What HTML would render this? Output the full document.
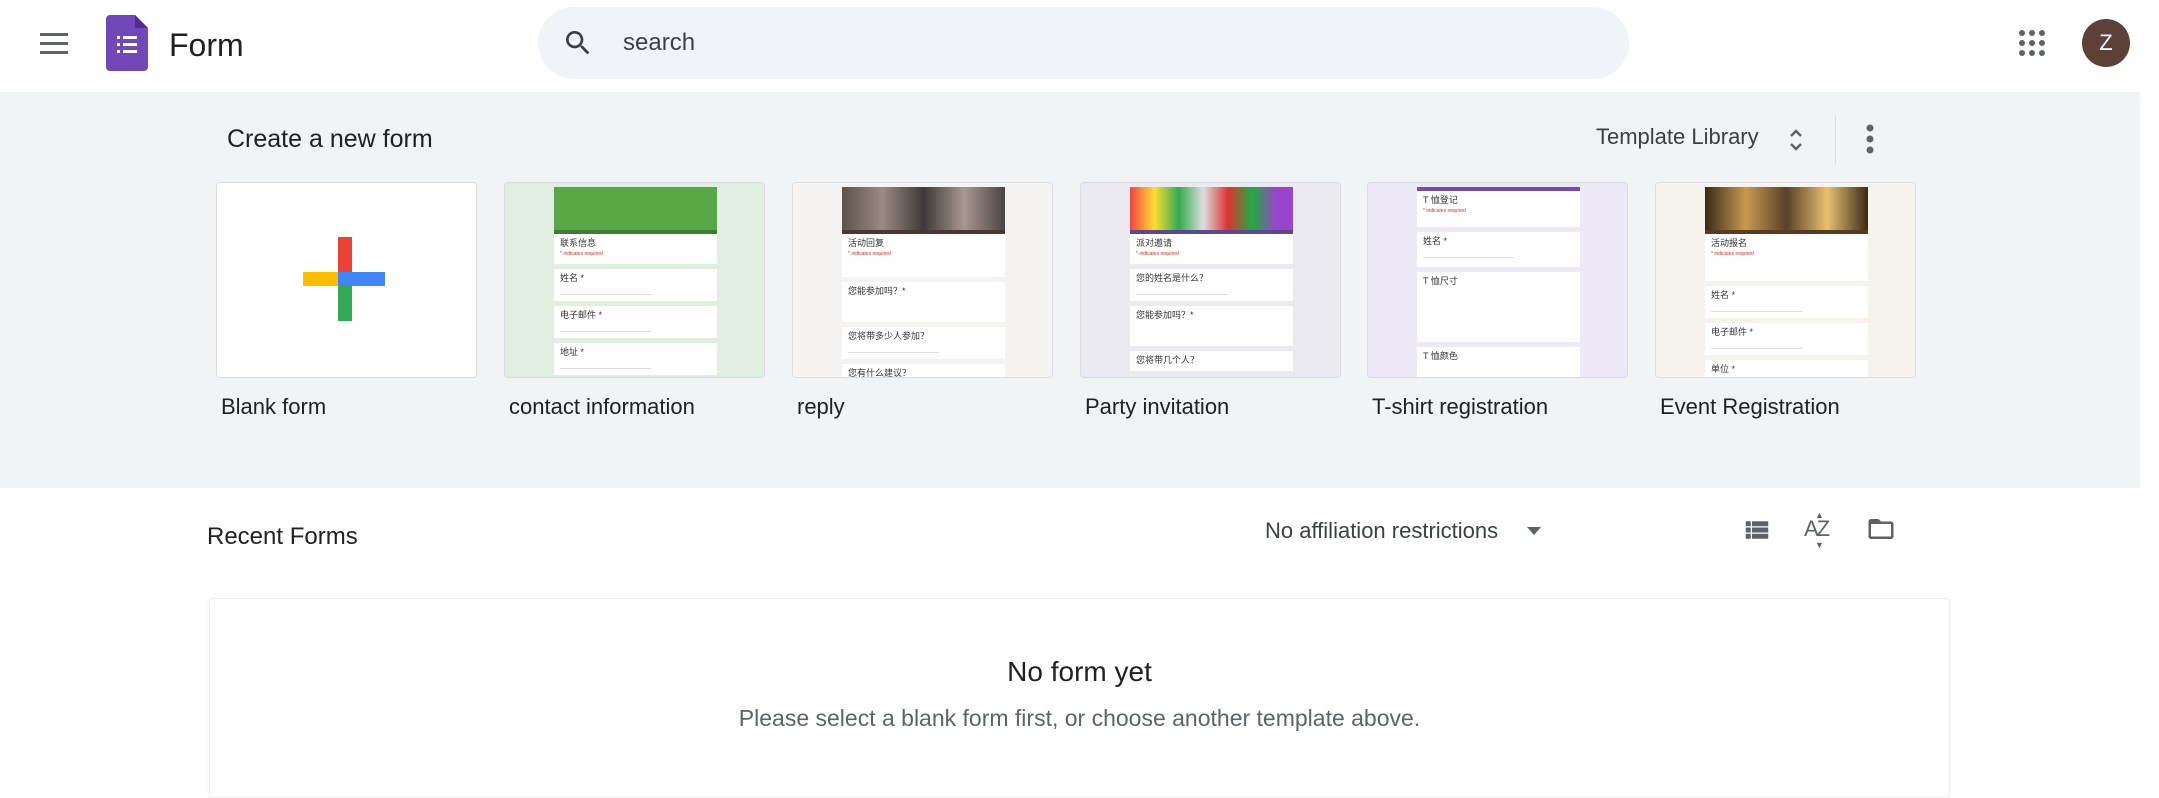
<!DOCTYPE html>
<html><head><meta charset="utf-8"><style>
*{box-sizing:border-box;margin:0;padding:0}
body{width:2159px;height:778px;overflow:hidden;background:#fff;font-family:"Liberation Sans","Noto Sans CJK SC",sans-serif;position:relative;color:#202124}
.a{position:absolute}
.band{left:0;top:92px;width:2140px;height:396px;background:#f1f3f4}
.card{position:absolute;top:182px;width:261px;height:196px;border:1px solid #dadce0;border-radius:4px;overflow:hidden}
.col{position:absolute;left:49px;top:4px;width:163px}
.img{height:43px}
.bar{height:4px}
.blk{background:#fff;margin-bottom:5px;padding:4px 6px;font-size:9px;line-height:11px;color:#333}
.red{color:#d93025;font-size:5px}
.ln{height:1px;background:#ddd;width:60%;margin-top:10px}
.lbl{position:absolute;top:394px;font-size:22px;color:#202124}
</style></head><body>
<div class="a" style="left:40px;top:33px;width:28px;height:3px;background:#5f6368;box-shadow:0 9px 0 #5f6368,0 18px 0 #5f6368"></div>
<svg class="a" style="left:106px;top:15px" width="42" height="56" viewBox="0 0 42 56"><path d="M4 0H29L42 13V52a4 4 0 0 1-4 4H4a4 4 0 0 1-4-4V4a4 4 0 0 1 4-4z" fill="#7248b9"/><path d="M29 0V13H42z" fill="#4e2d96"/><g fill="#fff"><rect x="11" y="21" width="3" height="3"/><rect x="11" y="28" width="3" height="3"/><rect x="11" y="35" width="3" height="3"/><rect x="17" y="21" width="14" height="3"/><rect x="17" y="28" width="14" height="3"/><rect x="17" y="35" width="14" height="3"/></g></svg>
<div class="a" style="left:169px;top:27px;font-size:32px;color:#202124">Form</div>
<div class="a" style="left:538px;top:7px;width:1091px;height:72px;border-radius:36px;background:#f0f3f7"></div>
<svg class="a" style="left:562px;top:27px" width="32" height="32" viewBox="0 0 24 24"><path d="M15.5 14h-.79l-.28-.27A6.470 6.470 0 0 0 16 9.5 6.5 6.5 0 1 0 9.5 16c1.61 0 3.090-.59 4.230-1.570l.27.28v.79l5 4.990L20.490 19l-4.990-5zm-6 0C7.010 14 5 11.990 5 9.5S7.010 5 9.5 5 14 7.010 14 9.5 11.990 14 9.5 14z" fill="#3c4043"/></svg>
<div class="a" style="left:623px;top:29px;font-size:24px;color:#3c4043">search</div>
<svg class="a" style="left:2018px;top:29px" width="28" height="28" viewBox="0 0 28 28" fill="#5f6368"><circle cx="4" cy="4" r="3"/><circle cx="14" cy="4" r="3"/><circle cx="24" cy="4" r="3"/><circle cx="4" cy="14" r="3"/><circle cx="14" cy="14" r="3"/><circle cx="24" cy="14" r="3"/><circle cx="4" cy="24" r="3"/><circle cx="14" cy="24" r="3"/><circle cx="24" cy="24" r="3"/></svg>
<div class="a" style="left:2082px;top:19px;width:48px;height:48px;border-radius:50%;background:#5d4037;color:#fff;font-size:22px;text-align:center;line-height:48px">Z</div>

<div class="a band"></div>
<div class="a" style="left:227px;top:125px;font-size:25px;color:#202124">Create a new form</div>
<div class="a" style="left:1596px;top:124px;font-size:22px;color:#3c4043">Template Library</div>
<svg class="a" style="left:1786px;top:126px" width="20" height="28" viewBox="0 0 20 28" fill="none" stroke="#5f6368" stroke-width="2.5"><path d="M5 10l5-5 5 5M5 18l5 5 5-5"/></svg>
<div class="a" style="left:1835px;top:116px;width:1px;height:48px;background:#dadce0"></div>
<svg class="a" style="left:1863px;top:124px" width="14" height="32" fill="#5f6368"><circle cx="7" cy="4" r="3.5"/><circle cx="7" cy="15" r="3.5"/><circle cx="7" cy="26" r="3.5"/></svg>

<div class="card" style="left:216px;background:#fff">
<div class="a" style="left:121px;top:54px;width:14px;height:45px;background:#ea4335"></div>
<div class="a" style="left:86px;top:89px;width:35px;height:14px;background:#fbbc04"></div>
<div class="a" style="left:121px;top:89px;width:47px;height:14px;background:#4285f4"></div>
<div class="a" style="left:121px;top:103px;width:14px;height:35px;background:#34a853"></div>
</div>
<div class="card" style="left:504px;background:#e3eee2"><div class="col">
<div class="img" style="background:#55a845"></div><div class="bar" style="background:#3e7d33"></div>
<div class="blk" style="height:30px">联系信息<div class="red">* indicates required</div></div>
<div class="blk" style="height:32px">姓名 *<div class="ln"></div></div>
<div class="blk" style="height:32px">电子邮件 *<div class="ln"></div></div>
<div class="blk" style="height:32px">地址 *<div class="ln"></div></div></div></div>
<div class="card" style="left:792px;background:#f5f3f1"><div class="col">
<div class="img" style="background:linear-gradient(90deg,#5c5450,#9a8a80,#3d3a3a,#a89890,#4a4444)"></div><div class="bar" style="background:#4e3533"></div>
<div class="blk" style="height:43px">活动回复<div class="red">* indicates required</div></div>
<div class="blk" style="height:40px">您能参加吗？*</div>
<div class="blk" style="height:32px">您将带多少人参加？<div class="ln"></div></div>
<div class="blk" style="height:20px">您有什么建议？</div></div></div>
<div class="card" style="left:1080px;background:#ebeaf0"><div class="col">
<div class="img" style="background:linear-gradient(90deg,#e44 0,#fd3 15%,#3a5 30%,#ddd 45%,#d33 60%,#2a4 75%,#94c 90%)"></div><div class="bar" style="background:#5a4a8a"></div>
<div class="blk" style="height:30px">派对邀请<div class="red">* indicates required</div></div>
<div class="blk" style="height:32px">您的姓名是什么？<div class="ln"></div></div>
<div class="blk" style="height:40px">您能参加吗？*</div>
<div class="blk" style="height:20px">您将带几个人？</div></div></div>
<div class="card" style="left:1367px;background:#eee9f7"><div class="col">
<div class="bar" style="background:#6d4fb5"></div>
<div class="blk" style="height:36px">T 恤登记<div class="red">* indicates required</div></div>
<div class="blk" style="height:35px">姓名 *<div class="ln"></div></div>
<div class="blk" style="height:70px">T 恤尺寸</div>
<div class="blk" style="height:40px">T 恤颜色</div></div></div>
<div class="card" style="left:1655px;background:#f6f3ef"><div class="col">
<div class="img" style="background:linear-gradient(90deg,#3a2a18,#c89a50,#5a4028,#e8c070,#3a2a18)"></div><div class="bar" style="background:#5a3a22"></div>
<div class="blk" style="height:47px">活动报名<div class="red">* indicates required</div></div>
<div class="blk" style="height:32px">姓名 *<div class="ln"></div></div>
<div class="blk" style="height:32px">电子邮件 *<div class="ln"></div></div>
<div class="blk" style="height:20px">单位 *</div></div></div>

<div class="lbl" style="left:221px">Blank form</div>
<div class="lbl" style="left:509px">contact information</div>
<div class="lbl" style="left:797px">reply</div>
<div class="lbl" style="left:1085px">Party invitation</div>
<div class="lbl" style="left:1372px">T-shirt registration</div>
<div class="lbl" style="left:1660px">Event Registration</div>

<div class="a" style="left:207px;top:523px;font-size:24px;color:#202124">Recent Forms</div>
<div class="a" style="left:1265px;top:518px;font-size:22px;color:#3c4043">No affiliation restrictions</div>
<div class="a" style="left:1527px;top:527px;width:0;height:0;border-left:7px solid transparent;border-right:7px solid transparent;border-top:8px solid #5f6368"></div>
<svg class="a" style="left:1742px;top:515px" width="30" height="30" viewBox="0 0 24 24"><path d="M3 14h4v-4H3v4zm0 5h4v-4H3v4zM3 9h4V5H3v4zm5 5h13v-4H8v4zm0 5h13v-4H8v4zM8 5v4h13V5H8z" fill="#5f6368"/></svg>
<div class="a" style="left:1804px;top:516px;font-size:22px;color:#5f6368;letter-spacing:-2px">AZ</div>
<div class="a" style="left:1815px;top:510px;font-size:9px;color:#5f6368">▲</div>
<div class="a" style="left:1815px;top:540px;font-size:9px;color:#5f6368">▼</div>
<svg class="a" style="left:1864px;top:514px" width="34" height="30" viewBox="0 0 24 24"><path d="M20 6h-8l-2-2H4c-1.1 0-2 .9-2 2v12c0 1.1.9 2 2 2h16c1.1 0 2-.9 2-2V8c0-1.1-.9-2-2-2zm0 12H4V8h16v10z" fill="#5f6368"/></svg>

<div class="a" style="left:209px;top:598px;width:1741px;height:200px;border:1px solid #eeeeee;box-shadow:0 1px 3px rgba(0,0,0,.06);border-radius:4px;background:#fff"></div>
<div class="a" style="left:0;width:2159px;top:656px;text-align:center;font-size:28px;color:#202124">No form yet</div>
<div class="a" style="left:0;width:2159px;top:705px;text-align:center;font-size:23px;color:#5f6368">Please select a blank form first, or choose another template above.</div>
</body></html>
